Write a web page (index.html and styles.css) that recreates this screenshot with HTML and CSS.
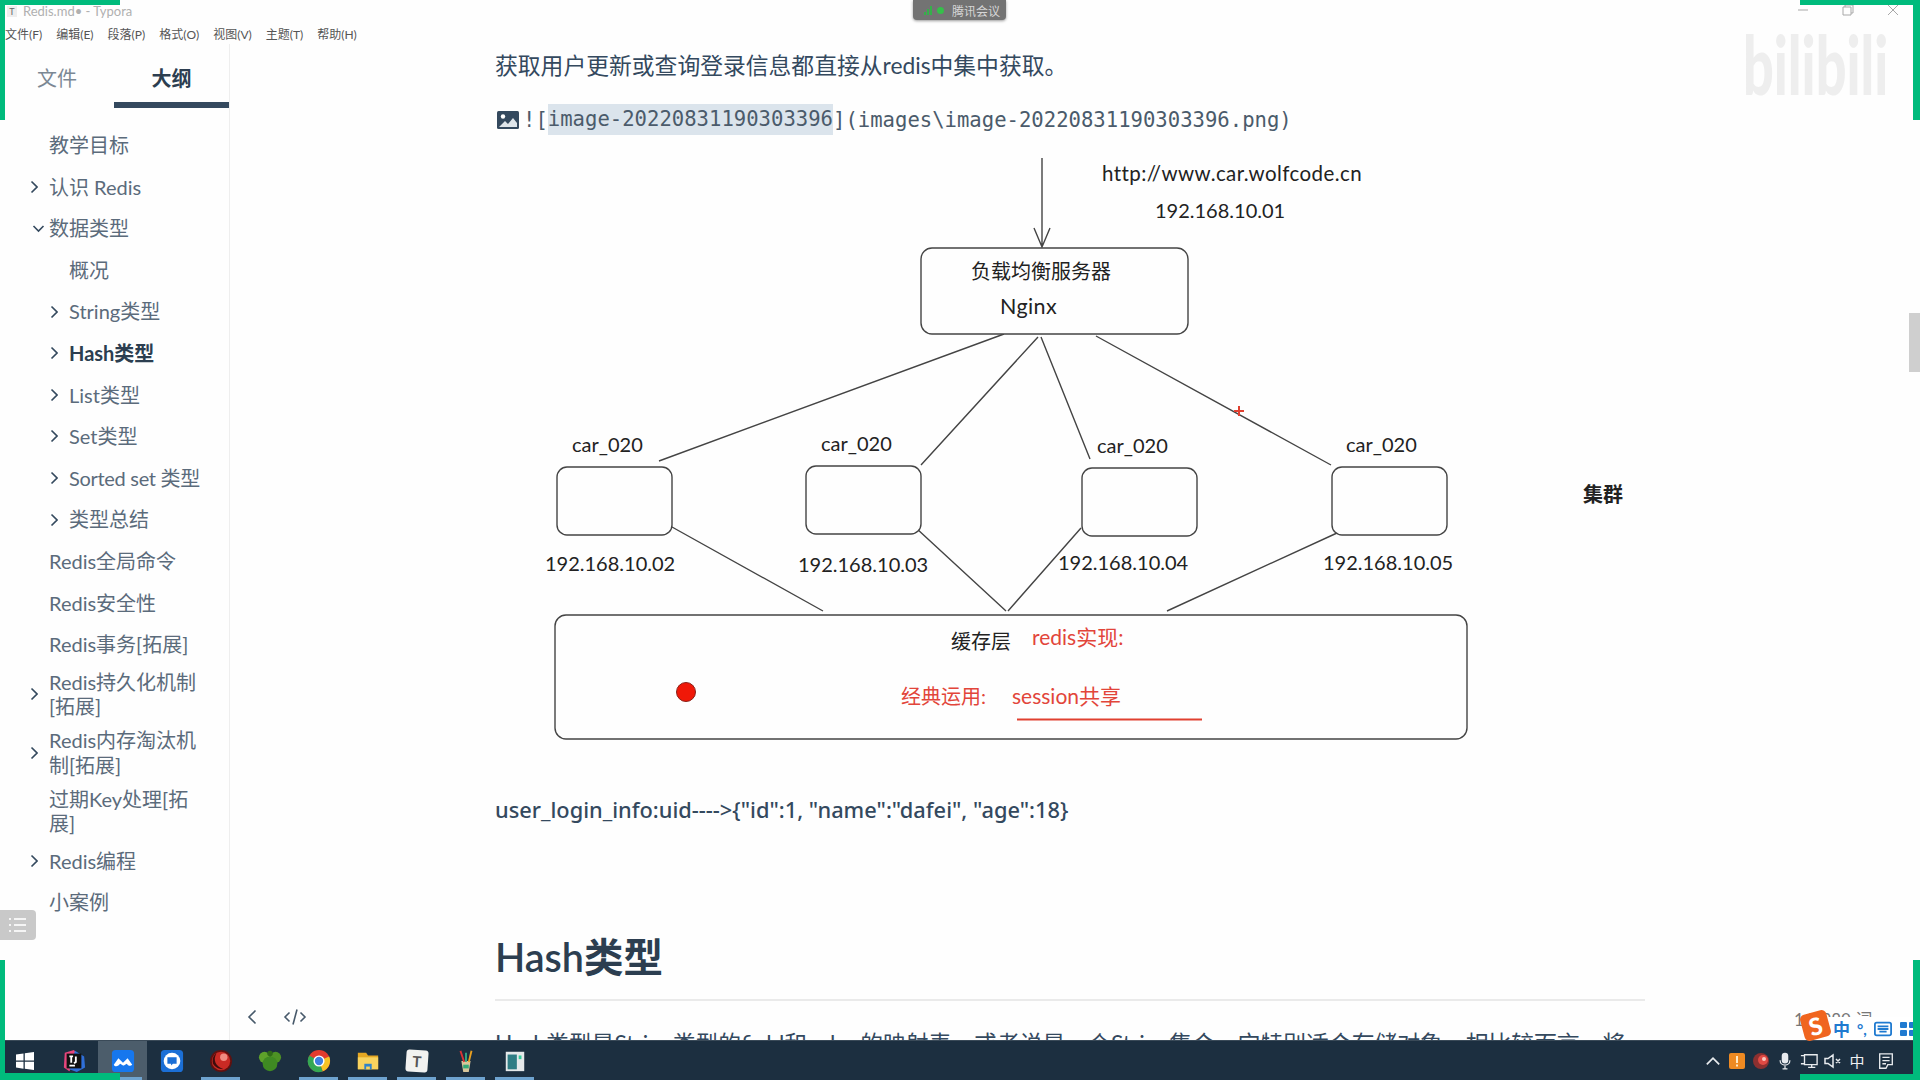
FILE: index.html
```html
<!DOCTYPE html>
<html lang="zh-CN">
<head>
  <meta charset="UTF-8" />
  <title>Redis.md - Typora</title>
  <link rel="stylesheet" href="styles.css">
</head>
<body>
  <div class="titlebar">
    <span class="app-icon">T</span>
    <span class="title-text">Redis.md• - Typora</span>
  </div>
  <div class="menubar">
    <span>文件(F)</span><span>编辑(E)</span><span>段落(P)</span><span>格式(O)</span><span>视图(V)</span><span>主题(T)</span><span>帮助(H)</span>
  </div>

  <div class="main">
    <aside class="sidebar">
      <div class="tabs">
        <div class="tab">文件</div>
        <div class="tab tab-active">大纲</div>
      </div>
      <ul class="outline">
        <li class="item"><i class="arrow"></i><span>教学目标</span></li>
        <li class="item"><i class="arrow"><svg viewBox="0 0 8 14"><path d="M1.5 1.5 7 7l-5.500 5.500"/></svg></i><span>认识 Redis</span></li>
        <li class="item"><i class="arrow"><svg class="open" viewBox="0 0 13 9"><path d="M1.500 2l5 5 5-5"/></svg></i><span>数据类型</span></li>
        <li class="item sub"><i class="arrow"></i><span>概况</span></li>
        <li class="item sub"><i class="arrow"><svg viewBox="0 0 8 14"><path d="M1.5 1.5 7 7l-5.500 5.500"/></svg></i><span>String类型</span></li>
        <li class="item sub current"><i class="arrow"><svg viewBox="0 0 8 14"><path d="M1.5 1.5 7 7l-5.500 5.500"/></svg></i><span>Hash类型</span></li>
        <li class="item sub"><i class="arrow"><svg viewBox="0 0 8 14"><path d="M1.5 1.5 7 7l-5.500 5.500"/></svg></i><span>List类型</span></li>
        <li class="item sub"><i class="arrow"><svg viewBox="0 0 8 14"><path d="M1.5 1.5 7 7l-5.500 5.500"/></svg></i><span>Set类型</span></li>
        <li class="item sub"><i class="arrow"><svg viewBox="0 0 8 14"><path d="M1.5 1.5 7 7l-5.500 5.500"/></svg></i><span class="tight">Sorted set 类型</span></li>
        <li class="item sub"><i class="arrow"><svg viewBox="0 0 8 14"><path d="M1.5 1.5 7 7l-5.500 5.500"/></svg></i><span>类型总结</span></li>
        <li class="item"><i class="arrow"></i><span>Redis全局命令</span></li>
        <li class="item"><i class="arrow"></i><span>Redis安全性</span></li>
        <li class="item"><i class="arrow"></i><span>Redis事务[拓展]</span></li>
        <li class="item"><i class="arrow"><svg viewBox="0 0 8 14"><path d="M1.5 1.5 7 7l-5.500 5.500"/></svg></i><span>Redis持久化机制[拓展]</span></li>
        <li class="item"><i class="arrow"><svg viewBox="0 0 8 14"><path d="M1.5 1.5 7 7l-5.500 5.500"/></svg></i><span>Redis内存淘汰机制[拓展]</span></li>
        <li class="item"><i class="arrow"></i><span>过期Key处理[拓展]</span></li>
        <li class="item"><i class="arrow"><svg viewBox="0 0 8 14"><path d="M1.5 1.5 7 7l-5.500 5.500"/></svg></i><span>Redis编程</span></li>
        <li class="item"><i class="arrow"></i><span>小案例</span></li>
      </ul>
      <div class="side-foot">
        <svg class="foot-back" viewBox="0 0 12 18"><path d="M9.500 2.500 3 9l6.500 6.500"/></svg>
        <svg class="foot-code" viewBox="0 0 24 18"><path d="M6.500 4.500 2 9l4.500 4.500M17.500 4.500 22 9l-4.500 4.500M14 1.500 10 16.500"/></svg>
      </div>
    </aside>

    <main class="content">
      <p class="para">获取用户更新或查询登录信息都直接从redis中集中获取。</p>
      <p class="source">
        <svg class="img-icon" viewBox="0 0 22 20"><rect x="0" y="1" width="22" height="18" rx="1.500" fill="#34495e"/><circle cx="6" cy="6.500" r="2.200" fill="#fff"/><path d="M2 17l6-6 3 3 5-6 4 5v4z" fill="#dfe5ea"/></svg><span>![</span><span class="picked">image-20220831190303396</span><span>](images\image-20220831190303396.png)</span>
      </p>

      <svg class="diagram" viewBox="495 150 1150 610" width="1150" height="610">
        <g class="lines">
          <path d="M1042 158V247M1034 228l8 19 8-19"/>
          <path d="M1004 334 659 461M1038 337 921 465M1041 337l49 122M1096 336l235 129"/>
          <path d="M672 527l151 84M916 528l90 83M1081 528l-73 83M1337 533l-170 78"/>
        </g>
        <g class="boxes">
          <rect x="921" y="248" width="267" height="86" rx="11"/>
          <rect x="557" y="467" width="115" height="68" rx="10"/>
          <rect x="806" y="466" width="115" height="68" rx="10"/>
          <rect x="1082" y="468" width="115" height="68" rx="10"/>
          <rect x="1332" y="467" width="115" height="68" rx="10"/>
          <rect x="555" y="615" width="912" height="124" rx="11"/>
        </g>
        <g class="labels">
          <text class="url" x="1102" y="181">http://www.car.wolfcode.cn</text>
          <text x="1155" y="218">192.168.10.01</text>
          <text x="971" y="279">负载均衡服务器</text>
          <text class="nginx" x="1000" y="314">Nginx</text>
          <text x="572" y="452">car_020</text>
          <text x="821" y="451">car_020</text>
          <text x="1097" y="453">car_020</text>
          <text x="1346" y="452">car_020</text>
          <text x="545" y="571">192.168.10.02</text>
          <text x="798" y="572">192.168.10.03</text>
          <text x="1058" y="570">192.168.10.04</text>
          <text x="1323" y="570">192.168.10.05</text>
          <text x="951" y="649">缓存层</text>
          <text class="strong" x="1583" y="502">集群</text>
        </g>
        <g class="labels red">
          <text class="wide" x="1032" y="645">redis实现:</text>
          <text x="901" y="704">经典运用:</text>
          <text class="wide" x="1012" y="704">session共享</text>
        </g>
        <path class="red-line" d="M1017 719.500H1202"/>
        <circle class="red-dot" cx="686" cy="692" r="9.500"/>
        <path class="red-line" d="M1234 411h10M1239 406v10"/>
      </svg>

      <p class="para code-line">user_login_info:uid----&gt;{"id":1, "name":"dafei", "age":18}</p>
      <h2 class="heading">Hash类型</h2>
      <p class="para cut">Hash类型是String类型的field和value的映射表，或者说是一个String集合，它特别适合存储对象，相比较而言，将</p>
    </main>
  </div>

  <div class="taskbar">
    <div class="tb-item"><svg viewBox="0 0 24 24"><path fill="#fff" d="M3 5.500 10.500 4.400v7H3zM11.800 4.200 21 3v8.400h-9.200zM3 12.800h7.500v7L3 18.600zM11.800 12.800H21V21l-9.200-1.200z"/></svg></div>
    <div class="tb-item"><svg viewBox="0 0 26 26"><path fill="#e8467c" d="M3 4l10-3 4 6-9 17-6-4z"/><path fill="#2f6fd8" d="M14 2l10 6 1 12-9 5-8-3z"/><rect x="5" y="5" width="16" height="16" fill="#111"/><path stroke="#fff" stroke-width="2" fill="none" d="M8 8h4M10 8v7M15 8v6l-2 1.500M8 18h6"/></svg></div>
    <div class="tb-item running open-app"><svg viewBox="0 0 26 26"><rect x="1" y="1" width="24" height="24" rx="4" fill="#1677ee"/><path fill="#fff" d="M3 17l5-7 5 5 5-5 5 7c-2 2-4 1-5 0l-1-1-3 2-1 0-3-2-2 2c-2 1-4 1-5-1z"/></svg></div>
    <div class="tb-item"><svg viewBox="0 0 26 26"><rect x="1" y="1" width="24" height="24" rx="4" fill="#1b6fd6"/><circle cx="13" cy="13" r="9" fill="#fff"/><path fill="#1b6fd6" d="M8 9h10v7h-4l-2 2v-2H8z"/></svg></div>
    <div class="tb-item open-app"><svg viewBox="0 0 26 26"><circle cx="13" cy="13" r="12" fill="#5f1210"/><circle cx="13" cy="13" r="10" fill="#c92a24"/><path fill="#3d0c0c" d="M8 5c-4 7-1 14 8 17-8 0-13-5-12-10 0-3 2-6 4-7z"/><circle cx="16" cy="9" r="4" fill="#f28b80"/></svg></div>
    <div class="tb-item"><svg viewBox="0 0 26 26"><circle cx="7" cy="9" r="6" fill="#5ea22a"/><circle cx="19" cy="9" r="6" fill="#4d9224"/><ellipse cx="13" cy="16" rx="8" ry="8" fill="#3f8a22"/><circle cx="13" cy="5" r="3" fill="#2f6a18"/></svg></div>
    <div class="tb-item open-app"><svg viewBox="0 0 26 26"><circle cx="13" cy="13" r="12" fill="#e33b2e"/><path fill="#f7c325" d="M13 13 24 8a12 12 0 0 1-7 16z"/><path fill="#34a853" d="M13 13 17 24.300A12 12 0 0 1 2.500 7z"/><circle cx="13" cy="13" r="6" fill="#fff"/><circle cx="13" cy="13" r="4.500" fill="#3f7fe0"/></svg></div>
    <div class="tb-item open-app"><svg viewBox="0 0 26 26"><path fill="#e5a823" d="M2 4h9l2 3h11v15H2z"/><path fill="#f8d35e" d="M2 9h22v13H2z"/><rect x="9" y="16" width="8" height="6" fill="#2f83c9"/><rect x="11" y="19" width="4" height="3" fill="#f8d35e"/></svg></div>
    <div class="tb-item open-app"><div class="typora-tile">T</div></div>
    <div class="tb-item open-app"><svg viewBox="0 0 26 26"><path fill="#d8c69a" d="M8 13h10l-2 12h-6z"/><path stroke="#d33" stroke-width="2" d="M7 2l4 12"/><path stroke="#3a8" stroke-width="2" d="M13 4v10"/><path stroke="#e9a020" stroke-width="2" d="M19 2l-3 12"/><path fill="#3a7" d="M10 17h6v4h-6z"/></svg></div>
    <div class="tb-item open-app"><svg viewBox="0 0 26 26"><rect x="3" y="3" width="20" height="21" fill="#e6e9ea"/><rect x="5" y="6" width="10" height="16" fill="#2f7d84"/><rect x="17" y="7" width="3" height="4" fill="#3c9"/></svg></div>
    <div class="tray">
      <span class="tray-item"><svg viewBox="0 0 16 16"><path class="tray-line" d="M2.500 11 8 5.500l5.500 5.500"/></svg></span>
      <span class="tray-item"><svg viewBox="0 0 18 18"><rect x="1" y="1" width="16" height="16" rx="2" fill="#ee8a22"/><path stroke="#ffe9c4" stroke-width="2" d="M9 4v7M9 12.500v2"/></svg></span>
      <span class="tray-item"><svg viewBox="0 0 18 18"><circle cx="9" cy="9" r="8" fill="#8c3030"/><circle cx="11" cy="8" r="5" fill="#e04a44"/><circle cx="12" cy="7" r="2" fill="#f8c8c0"/></svg></span>
      <span class="tray-item"><svg viewBox="0 0 18 22"><rect x="5" y="1" width="8" height="13" rx="4" fill="#e7eaee"/><path class="tray-line" d="M3 10c0 8 12 8 12 0M9 17v3M6 20.500h6"/></svg></span>
      <span class="tray-item"><svg viewBox="0 0 22 20"><path class="tray-line" d="M6 3h14v11H6zM2 4h4v9H2M10 17h8M14 14v3"/></svg></span>
      <span class="tray-item"><svg viewBox="0 0 20 18"><path class="tray-line" d="M2 6.500h3L10 3v12l-5-3.500H2zM13 7l4 4M17 7l-4 4"/></svg></span>
      <span class="tray-item tray-text">中</span>
      <span class="tray-item tray-last"><svg viewBox="0 0 20 20"><path class="tray-line" d="M3 2h14v12h-5l-2 4H3zM6 6h8M6 9.500h8M6 13h4"/></svg></span>
    </div>
  </div>

  <!-- things lying on top of the window -->
  <div class="meeting-pill"><i class="bar b1"></i><i class="bar b2"></i><i class="bar b3"></i><i class="dot"></i><span>腾讯会议</span></div>
  <div class="win-controls">
    <svg viewBox="0 0 12 12"><path d="M1 6h10"/></svg>
    <svg viewBox="0 0 12 12"><path d="M1 3h8v8H1zM3 3V1h8v8H9"/></svg>
    <svg viewBox="0 0 12 12"><path d="M1 1l10 10M11 1 1 11"/></svg>
  </div>
  <div class="watermark">bilibili</div>
  <div class="scroll-thumb"></div>
  <div class="toc-toggle"><svg viewBox="0 0 20 16"><path d="M6 2h12M6 8h12M6 14h12M1 2h2M1 8h2M1 14h2"/></svg></div>
  <div class="word-count">1/6980 词</div>
  <div class="ime-bar">
    <div class="ime-logo">S</div>
    <span class="ime-zh">中</span>
    <span class="ime-punc">°,</span>
    <svg viewBox="0 0 20 16"><rect x="1" y="1" width="18" height="14" rx="2" fill="none" stroke="#1f7ad0" stroke-width="2"/><path stroke="#1f7ad0" stroke-width="2" d="M4 5h12M4 8h12M6 11h8"/></svg>
    <svg viewBox="0 0 16 16"><rect x="0" y="1" width="7" height="6" rx="1" fill="#1f7ad0"/><rect x="9" y="1" width="7" height="6" rx="1" fill="#1f7ad0"/><rect x="0" y="9" width="7" height="6" rx="1" fill="#1f7ad0"/><rect x="9" y="9" width="7" height="6" rx="1" fill="#1f7ad0"/></svg>
  </div>

  <div class="corner tl"></div>
  <div class="corner tr"></div>
  <div class="corner bl"></div>
  <div class="corner br"></div>
</body>
</html>
```
FILE: styles.css
```css
* {
  box-sizing: border-box;
}
html, body {
  margin: 0;
  height: 1080px;
  overflow: hidden;
}
body {
  position: relative;
  display: flex;
  flex-direction: column;
  background: #fefefe;
  color: #34495e;
  font-family: Lato, "Noto Sans CJK SC", sans-serif;
}

/* title + menu */
.titlebar {
  height: 22px;
  display: flex;
  align-items: center;
  padding-left: 7px;
  font-size: 13px;
  color: #b0b0b0;
}
.app-icon {
  width: 10px;
  font-size: 9px;
  color: #666;
  background: #eee;
  text-align: center;
  margin-right: 6px;
}
.menubar {
  height: 22px;
  display: flex;
  gap: 14px;
  align-items: center;
  padding-left: 5px;
  font-size: 12px;
  color: #555;
}

.main {
  flex: 1;
  display: flex;
  min-height: 0;
}

/* sidebar */
.sidebar {
  width: 230px;
  flex: none;
  display: flex;
  flex-direction: column;
  border-right: 1px solid #eeeeee;
}
.tabs {
  height: 64px;
  display: flex;
  flex: none;
}
.tab {
  width: 114px;
  padding-top: 21px;
  text-align: center;
  font-size: 20px;
  line-height: 26px;
  color: #7b8894;
}
.tab-active {
  width: 115px;
  color: #2c3e50;
  font-weight: 700;
  border-bottom: 6px solid #34495e;
}
.outline {
  list-style: none;
  margin: 0;
  padding: 16.500px 0 0 29px;
  flex: 1;
  font-size: 20px;
  line-height: 24.5px;
  color: #5b6b7b;
}
.item {
  display: flex;
  align-items: center;
  min-height: 41.6px;
  padding: 4.7px 28px 4.7px 0;
}
.sub {
  padding-left: 20px;
  padding-right: 0;
}
.tight {
  letter-spacing: -0.3px;
}
.current {
  color: #2c3e50;
  font-weight: 700;
}
.arrow {
  width: 20px;
  flex: none;
  display: flex;
  padding-left: 1px;
}
.arrow svg {
  width: 8px;
  height: 14px;
  fill: none;
  stroke: #34495e;
  stroke-width: 1.6;
}
.arrow svg.open {
  width: 13px;
  height: 9px;
  margin-left: 2px;
}
.side-foot {
  height: 32px;
  flex: none;
  display: flex;
  align-items: flex-start;
  gap: 25px;
  padding-left: 246px;
  margin-right: -100px;
}
.side-foot svg {
  height: 18px;
  fill: none;
  stroke: #47596a;
  stroke-width: 1.6;
}
.foot-back {
  width: 12px;
}
.foot-code {
  width: 24px;
}

/* document */
.content {
  flex: 1;
  min-width: 0;
  overflow: hidden;
  padding: 5px 0 0 265px;
}
.para {
  margin: 0;
  font-size: 22.800px;
  line-height: 32px;
  color: #34495e;
}
.source {
  display: flex;
  align-items: center;
  margin: 22.500px 0 0 2px;
  height: 32px;
  font-family: "DejaVu Sans Mono", monospace;
  font-size: 20.600px;
  color: #4b5b6b;
}
.img-icon {
  width: 22px;
  height: 20px;
  margin-right: 4px;
}
.picked {
  background: #dbe4ec;
  line-height: 31px;
}
.diagram {
  display: block;
  margin-top: 14.500px;
  overflow: visible;
}
.lines path, .boxes rect {
  fill: none;
  stroke: #444;
  stroke-width: 1.400;
}
.boxes rect {
  fill: #fefefe;
}
.labels text {
  font-size: 20px;
  fill: #222;
}
.labels .url {
  font-size: 20.500px;
  letter-spacing: 0.42px;
}
.labels .nginx {
  font-size: 21.500px;
  letter-spacing: 0.4px;
}
.labels .wide {
  font-size: 21px;
}
.labels .strong {
  font-weight: 700;
}
.red text {
  fill: #e2453a;
}
.red-line {
  fill: none;
  stroke: #e04030;
  stroke-width: 2;
}
.red-dot {
  fill: #f01808;
  stroke: #8a2018;
}
.code-line {
  margin-top: 33px;
  font-family: "Noto Sans", "Noto Sans CJK SC", sans-serif;
  font-size: 21.800px;
  font-weight: 500;
  line-height: 33px;
  white-space: nowrap;
}
.heading {
  width: 1150px;
  height: 175px;
  margin: 0;
  padding-top: 106px;
  font-size: 39.500px;
  line-height: 50px;
  font-weight: 600;
  color: #2c3e50;
  border-bottom: 2px solid #eaeaea;
}
.cut {
  width: 1150px;
  margin-top: 26px;
  white-space: nowrap;
  overflow: hidden;
}

/* taskbar */
.taskbar {
  height: 40px;
  flex: none;
  display: flex;
  background: #1c2f40;
  border-top: 1px solid #3a4a58;
}
.tb-item {
  position: relative;
  width: 49px;
  display: flex;
  align-items: center;
  justify-content: center;
}
.tb-item svg {
  width: 24px;
  height: 24px;
}
.running {
  background: #4c5d6b;
}
.open-app::after {
  content: "";
  position: absolute;
  left: 5px;
  right: 5px;
  bottom: 0;
  height: 3px;
  background: #6ea3cf;
}
.typora-tile {
  width: 22px;
  height: 22px;
  background: #f2f2f0;
  color: #555;
  font-size: 15px;
  font-weight: 700;
  line-height: 22px;
  text-align: center;
  border-radius: 3px;
  transform: rotate(4deg);
}
.tray {
  margin-left: auto;
  display: flex;
  align-items: center;
  padding-right: 22px;
}
.tray-item {
  width: 24px;
  display: flex;
  justify-content: center;
}
.tray-item svg {
  height: 18px;
  width: 20px;
}
.tray-line {
  fill: none;
  stroke: #e8ebee;
  stroke-width: 1.500;
}
.tray-text {
  color: #eef0f2;
  font-size: 15px;
}
.tray-last {
  margin-left: 5px;
}

/* overlays */
.meeting-pill {
  position: absolute;
  left: 913px;
  top: 0;
  width: 93px;
  height: 20px;
  display: flex;
  align-items: center;
  gap: 1px;
  padding-left: 11px;
  background: #737373;
  border-radius: 0 0 4px 4px;
  box-shadow: 0 1px 3px rgba(0,0,0,0.4);
  color: #d6d6d6;
  font-size: 12px;
}
.meeting-pill .bar {
  width: 2px;
  background: #35b04a;
  align-self: flex-end;
  margin-bottom: 5px;
}
.b1 { height: 3px; }
.b2 { height: 6px; }
.b3 { height: 9px; }
.meeting-pill .dot {
  width: 7px;
  height: 7px;
  border-radius: 50%;
  background: #35c04a;
  margin: 0 7px 0 4px;
}
.win-controls {
  position: absolute;
  top: 4px;
  left: 1797px;
  display: flex;
  gap: 33px;
}
.win-controls svg {
  width: 12px;
  height: 12px;
  fill: none;
  stroke: #a8a8a8;
}
.watermark {
  position: absolute;
  left: 1743px;
  top: 35px;
  font-size: 54px;
  line-height: 60px;
  font-weight: 900;
  color: #eeeeee;
  transform: scaleY(1.5);
}
.scroll-thumb {
  position: absolute;
  right: 0;
  top: 313px;
  width: 11px;
  height: 59px;
  background: #cfcfcf;
}
.toc-toggle {
  position: absolute;
  left: 0;
  top: 910px;
  width: 36px;
  height: 30px;
  background: #c9c9c9;
  border-radius: 0 4px 4px 0;
  display: flex;
  align-items: center;
  justify-content: center;
}
.toc-toggle svg {
  width: 20px;
  height: 16px;
  fill: none;
  stroke: #f5f5f5;
  stroke-width: 2;
}
.word-count {
  position: absolute;
  left: 1794px;
  top: 1006px;
  font-size: 17px;
  color: #777;
}
.ime-bar {
  position: absolute;
  left: 1803px;
  top: 1017px;
  width: 110px;
  height: 23px;
  display: flex;
  align-items: center;
  padding-left: 30px;
  gap: 7px;
  background: #ffffff;
}
.ime-bar svg {
  width: 18px;
  height: 16px;
  flex: none;
}
.ime-logo {
  position: absolute;
  left: -1px;
  top: -5px;
  width: 27px;
  height: 27px;
  background: #f0651f;
  border-radius: 5px;
  transform: rotate(-15deg);
  color: #fff;
  font-size: 24px;
  font-weight: 900;
  line-height: 27px;
  text-align: center;
}
.ime-zh {
  font-size: 17px;
  font-weight: 700;
  color: #1f7ad0;
}
.ime-punc {
  width: 14px;
  font-size: 15px;
  font-weight: 700;
  color: #1f7ad0;
}
.corner {
  position: absolute;
  width: 120px;
  height: 120px;
  border: 0 solid #00bb7c;
}
.tl { left: 0; top: 0; border-width: 5px 0 0 5px; }
.tr { right: 0; top: 0; border-width: 5px 7px 0 0; }
.bl { left: 0; bottom: 0; border-width: 0 0 7px 5px; }
.br { right: 0; bottom: 0; border-width: 0 7px 6px 0; }
```
